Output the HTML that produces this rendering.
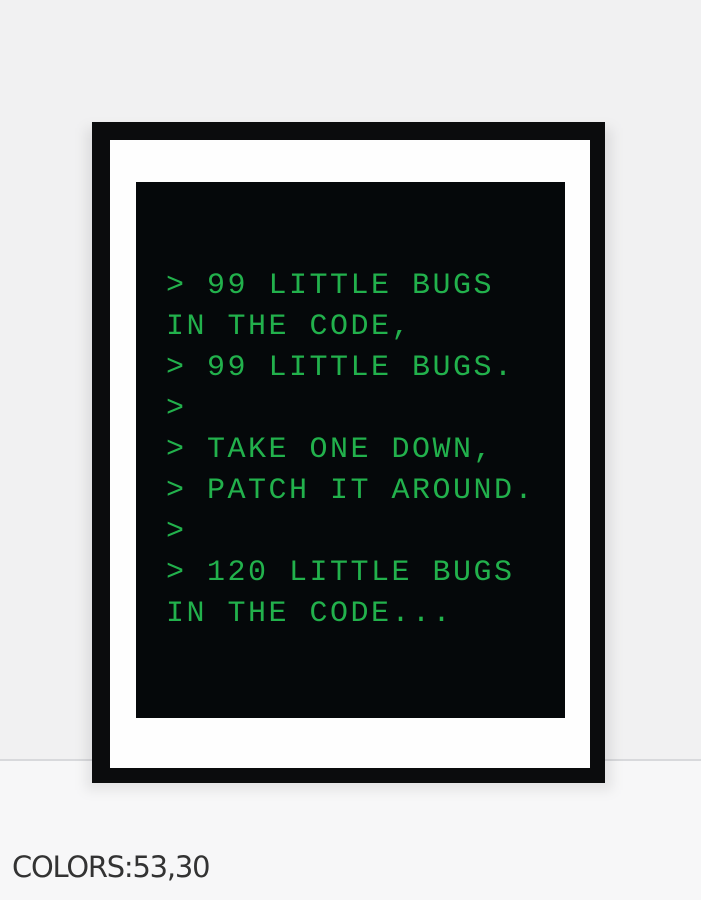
<!DOCTYPE html>
<html><head><meta charset="utf-8"><style>
html,body{margin:0;padding:0;}
body{width:701px;height:900px;position:relative;overflow:hidden;background:#f7f7f8;font-family:"Liberation Mono",monospace;}
.wall{position:absolute;left:0;top:0;width:701px;height:760px;background:#f1f1f2;}
.line{position:absolute;left:0;top:759px;width:701px;height:2px;background:#d8d9dc;}
.shadow{position:absolute;left:86px;top:128px;width:526px;height:662px;background:rgba(0,0,0,0.08);filter:blur(6px);}
.frame{position:absolute;left:92px;top:122px;width:513px;height:661px;background:#0b0c0d;}
.mat{position:absolute;left:110px;top:140px;width:480px;height:628px;background:#fefefe;}
.panel{position:absolute;left:136px;top:182px;width:429px;height:536px;background:#05080a;}
.txt{position:absolute;left:166px;top:266px;color:#22b14c;font-size:30px;line-height:41px;letter-spacing:2.5px;white-space:pre;}
.cap{position:absolute;left:12px;top:852px;font-family:"DejaVu Sans Condensed","DejaVu Sans",sans-serif;font-size:27px;color:#333;letter-spacing:-1px;transform-origin:0 50%;transform:scale(1.19,1.1);}
</style></head><body>
<div class="wall"></div><div class="line"></div>
<div class="shadow"></div>
<div class="frame"></div><div class="mat"></div>
<div class="panel"></div>
<div class="txt">&gt; 99 LITTLE BUGS
IN THE CODE,
&gt; 99 LITTLE BUGS.
&gt;
&gt; TAKE ONE DOWN,
&gt; PATCH IT AROUND.
&gt;
&gt; 120 LITTLE BUGS
IN THE CODE...</div>
<div class="cap">COLORS:53,30</div>
</body></html>
